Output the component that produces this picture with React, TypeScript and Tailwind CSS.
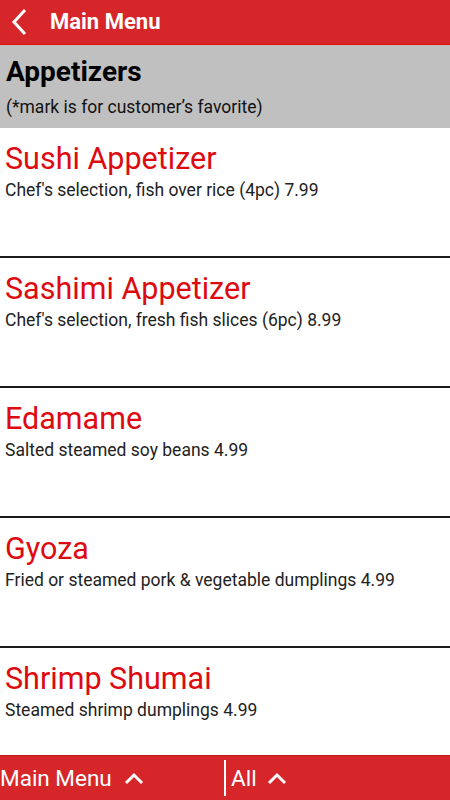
const items = [
  { title: 'Sushi Appetizer', desc: "Chef's selection, fish over rice (4pc) 7.99" },
  { title: 'Sashimi Appetizer', desc: "Chef's selection, fresh fish slices (6pc) 8.99" },
  { title: 'Edamame', desc: 'Salted steamed soy beans 4.99' },
  { title: 'Gyoza', desc: 'Fried or steamed pork & vegetable dumplings 4.99' },
  { title: 'Shrimp Shumai', desc: 'Steamed shrimp dumplings 4.99' },
]

const CaretUp = () => (
  <svg width="20" height="13" viewBox="0 0 20 13" className="shrink-0">
    <polyline points="2,11 10,3 18,11" fill="none" stroke="white" strokeWidth="3" />
  </svg>
)

const App = () => {
  return (
    <div className="w-[450px] h-[800px] flex flex-col bg-white overflow-hidden font-['Roboto',sans-serif]">
      {/* Top bar */}
      <div className="h-[45px] shrink-0 bg-[#d6262a] border-b border-[#e01010] flex items-center">
        <svg width="18" height="28" viewBox="0 0 18 28" className="ml-[10px] shrink-0">
          <polyline points="15,2 4,14 15,26" fill="none" stroke="white" strokeWidth="3" />
        </svg>
        <span className="ml-[22px] text-[22px] font-bold text-white leading-none">Main Menu</span>
      </div>

      {/* Section header */}
      <div className="h-[83px] shrink-0 bg-[#c0c0c0] px-[6px] pt-[10px]">
        <h1 className="text-[28px] font-bold text-black leading-[34px]">Appetizers</h1>
        <p className="text-[17.5px] text-[#111] leading-[24px] mt-[6px]">(*mark is for customer’s favorite)</p>
      </div>

      {/* Items */}
      <div className="flex-1 overflow-hidden">
        {items.map((item, i) => (
          <div key={i} className="h-[130px] border-b-2 border-[#1a1a1a] px-[5px] pt-[12px]">
            <div className="text-[30.5px] text-[#dd0a10] leading-[38px]">{item.title}</div>
            <div className="text-[17.5px] text-[#222] leading-[24px]">{item.desc}</div>
          </div>
        ))}
      </div>

      {/* Bottom bar */}
      <div className="h-[45px] shrink-0 bg-[#d6262a] border-t border-[#c01818] flex items-center text-white">
        <div className="w-[224px] flex items-center">
          <span className="text-[22.5px] leading-none">Main Menu</span>
          <span className="ml-[12px]"><CaretUp /></span>
        </div>
        <div className="w-[2px] h-[36px] bg-white" />
        <div className="flex items-center ml-[5px]">
          <span className="text-[22.5px] leading-none">All</span>
          <span className="ml-[10px]"><CaretUp /></span>
        </div>
      </div>
    </div>
  )
}

export default App
